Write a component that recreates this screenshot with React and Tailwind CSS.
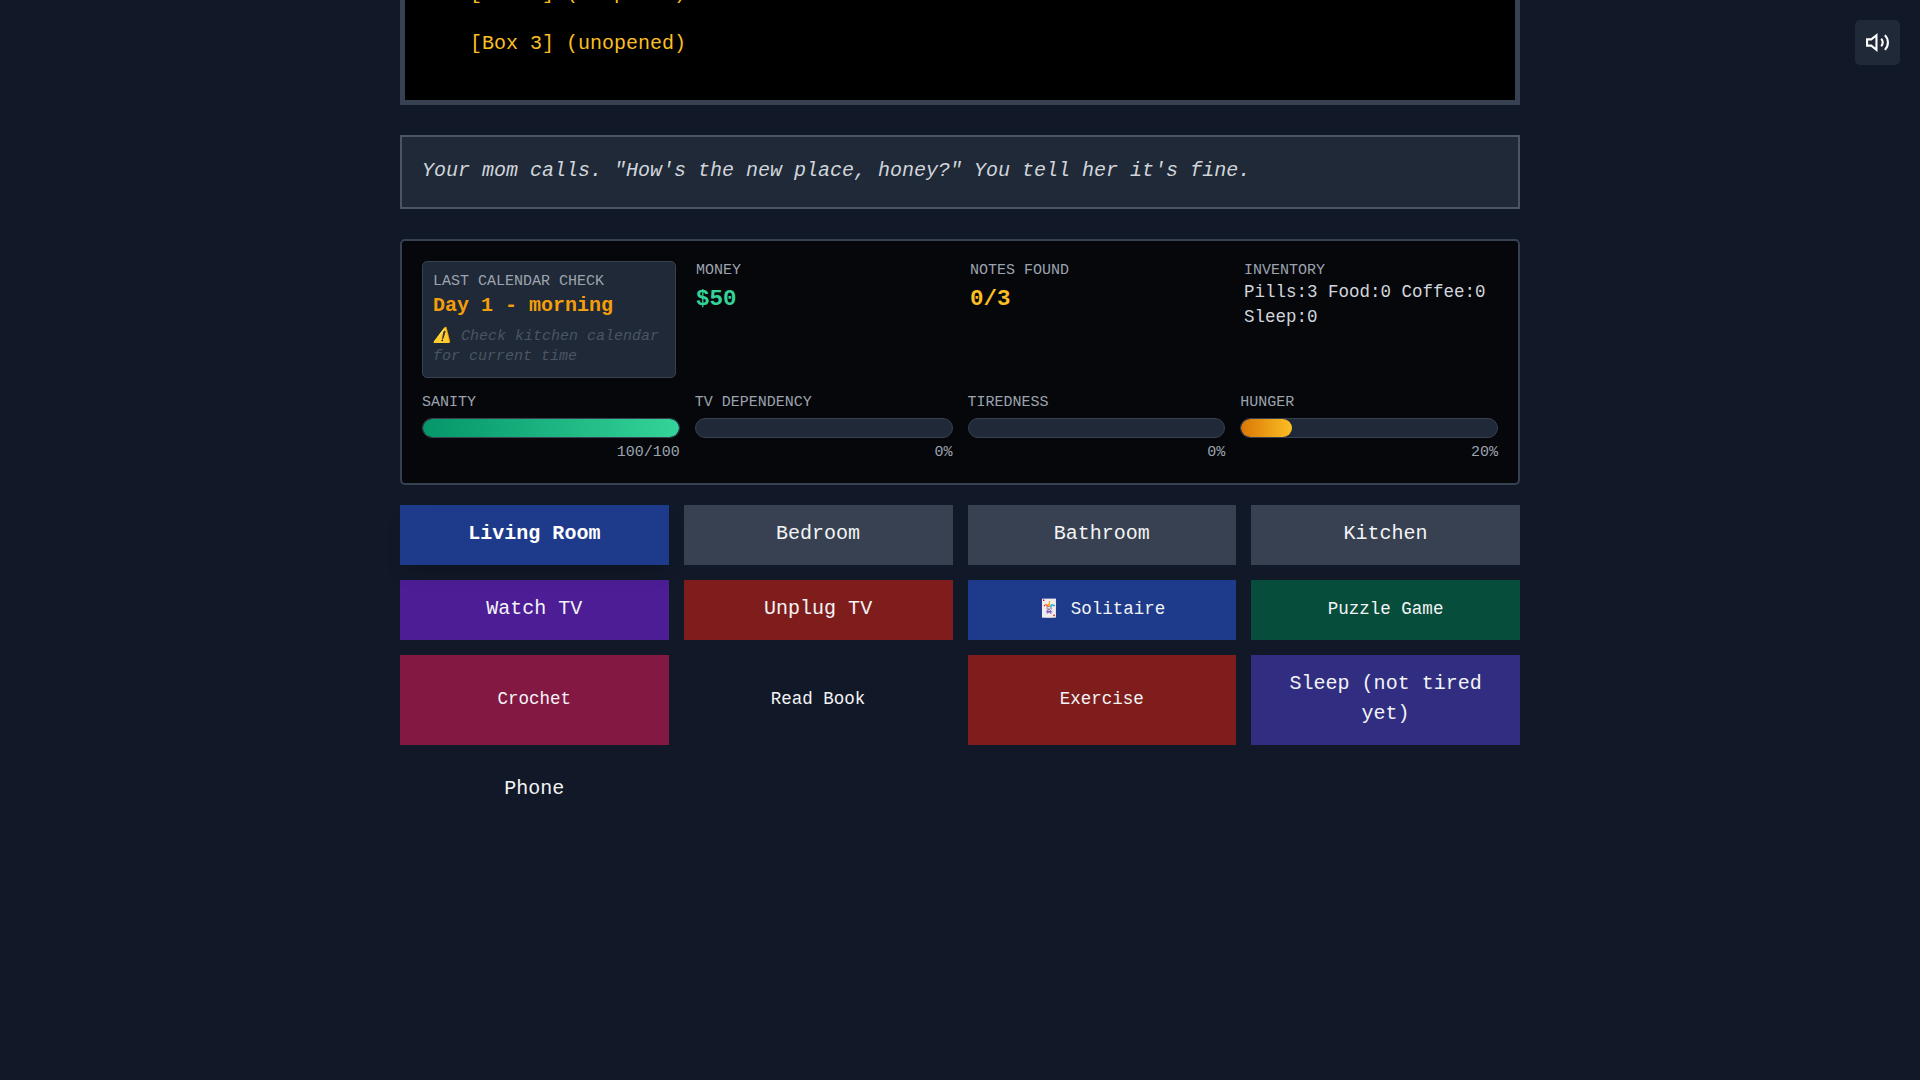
import { useState } from 'react';
import clsx from 'clsx';

const BOXES = ['Box 2', 'Box 3'];

const BARS = [
  { label: 'SANITY', value: 100, text: '100/100', fill: 'from-[#059669] to-[#34d399]' },
  { label: 'TV DEPENDENCY', value: 0, text: '0%', fill: 'from-[#7c3aed] to-[#a78bfa]' },
  { label: 'TIREDNESS', value: 0, text: '0%', fill: 'from-[#2563eb] to-[#60a5fa]' },
  { label: 'HUNGER', value: 20, text: '20%', fill: 'from-[#d97706] to-[#fbbf24]' },
];

const ROOMS = ['Living Room', 'Bedroom', 'Bathroom', 'Kitchen'];

const ACTIONS = [
  { label: 'Watch TV', color: 'bg-[#4c1d95]' },
  { label: 'Unplug TV', color: 'bg-[#7f1d1d]' },
  { label: '🃏 Solitaire', color: 'bg-[#1e3a8a]', small: true },
  { label: 'Puzzle Game', color: 'bg-[#064e3b]', small: true },
  { label: 'Crochet', color: 'bg-[#831843]', small: true },
  { label: 'Read Book', small: true },
  { label: 'Exercise', color: 'bg-[#7f1d1d]', small: true },
  { label: 'Sleep (not tired yet)', color: 'bg-[#312e81]' },
  { label: 'Phone' },
];

function StatLabel({ children }) {
  return <div className="text-[15px] leading-5 text-[#9ca3af]">{children}</div>;
}

function StatBar({ label, value, text, fill }) {
  return (
    <div>
      <StatLabel>{label}</StatLabel>
      <div className="my-[5px] h-5 overflow-hidden rounded-full border border-[#374151] bg-[#1f2937]">
        <div
          className={clsx('h-full rounded-full bg-linear-to-r/srgb', fill)}
          style={{ width: `${value}%` }}
        />
      </div>
      <div className="text-right text-[15px] leading-5 text-[#9ca3af]">{text}</div>
    </div>
  );
}

function SoundButton({ muted, onClick }) {
  return (
    <button
      className="fixed top-5 right-5 rounded-[5px] bg-[#1f2937] p-2.5 text-white"
      onClick={onClick}
      aria-label="Toggle sound"
    >
      <svg
        className="size-[25px]"
        viewBox="0 0 24 24"
        fill="none"
        stroke="currentColor"
        strokeWidth="2"
      >
        <path d="M11 5L6 9H2v6h4l5 4V5z" />
        {!muted && (
          <>
            <path d="M15.54 8.46a5 5 0 0 1 0 7.07" />
            <path d="M19.07 4.93a10 10 0 0 1 0 14.14" />
          </>
        )}
      </svg>
    </button>
  );
}

export default function App() {
  const [room, setRoom] = useState('Living Room');
  const [muted, setMuted] = useState(false);

  return (
    <div className="h-screen overflow-hidden bg-[#111827] font-['Liberation_Mono',monospace] text-[20px] leading-[30px] text-[#f3f4f6]">
      <SoundButton muted={muted} onClick={() => setMuted((m) => !m)} />

      <div className="mx-auto w-[1120px]">
        {/* Room view, scrolled to its last lines */}
        <div className="flex h-[105px] flex-col justify-end gap-5 overflow-hidden border-5 border-t-0 border-[#374151] bg-black px-[65px] pb-[41px] text-[#fbbf24]">
          {BOXES.map((box) => (
            <div key={box} className="shrink-0">
              [{box}] (unopened)
            </div>
          ))}
        </div>

        {/* Event message */}
        <div className="mt-[30px] border-2 border-[#4b5563] bg-[#1f2937] px-5 pt-[19px] pb-[21px] text-[#d1d5db] italic">
          Your mom calls. "How's the new place, honey?" You tell her it's fine.
        </div>

        {/* Stats */}
        <div className="mt-[30px] rounded-[5px] border-2 border-[#374151] bg-black/70 p-5">
          <div className="grid grid-cols-4 gap-5">
            <div className="rounded-[5px] border border-[#374151] bg-[#1f2937] p-2.5">
              <StatLabel>LAST CALENDAR CHECK</StatLabel>
              <div className="pb-0.5 leading-[28px] font-bold text-[#f59e0b]">Day 1 - morning</div>
              <div className="mt-[5px] text-[15px] leading-5 text-[#4b5563] italic">
                ⚠️ Check kitchen calendar for current time
              </div>
            </div>
            <div>
              <StatLabel>MONEY</StatLabel>
              <div className="pt-px text-[22.5px] leading-[35px] font-bold text-[#34d399]">$50</div>
            </div>
            <div>
              <StatLabel>NOTES FOUND</StatLabel>
              <div className="pt-px text-[22.5px] leading-[35px] font-bold text-[#fbbf24]">0/3</div>
            </div>
            <div>
              <StatLabel>INVENTORY</StatLabel>
              <div className="-mt-px text-[17.5px] leading-[25px] text-[#d1d5db]">
                Pills:3 Food:0 Coffee:0 Sleep:0
              </div>
            </div>
          </div>

          <div className="mt-[15px] grid grid-cols-4 gap-[15px]">
            {BARS.map((bar) => (
              <StatBar key={bar.label} {...bar} />
            ))}
          </div>
        </div>

        {/* Rooms and actions */}
        <div className="mt-5 grid grid-cols-4 gap-[15px]">
          {ROOMS.map((name) => (
            <button
              key={name}
              className={clsx(
                'px-[15px] pt-[14px] pb-4',
                name === room
                  ? 'relative bg-[#1e3a8a] font-bold text-white shadow-[0_12.5px_18.75px_-3.75px_rgba(0,0,0,0.1),0_5px_7.5px_-5px_rgba(0,0,0,0.1)]'
                  : 'bg-[#374151]'
              )}
              onClick={() => setRoom(name)}
            >
              {name}
            </button>
          ))}
          {ACTIONS.map(({ label, color, small }) => (
            <button
              key={label}
              className={clsx(
                'px-[15px] pt-[14px] pb-4',
                color,
                small && 'text-[17.5px] leading-[25px]'
              )}
            >
              {label}
            </button>
          ))}
        </div>
      </div>
    </div>
  );
}
